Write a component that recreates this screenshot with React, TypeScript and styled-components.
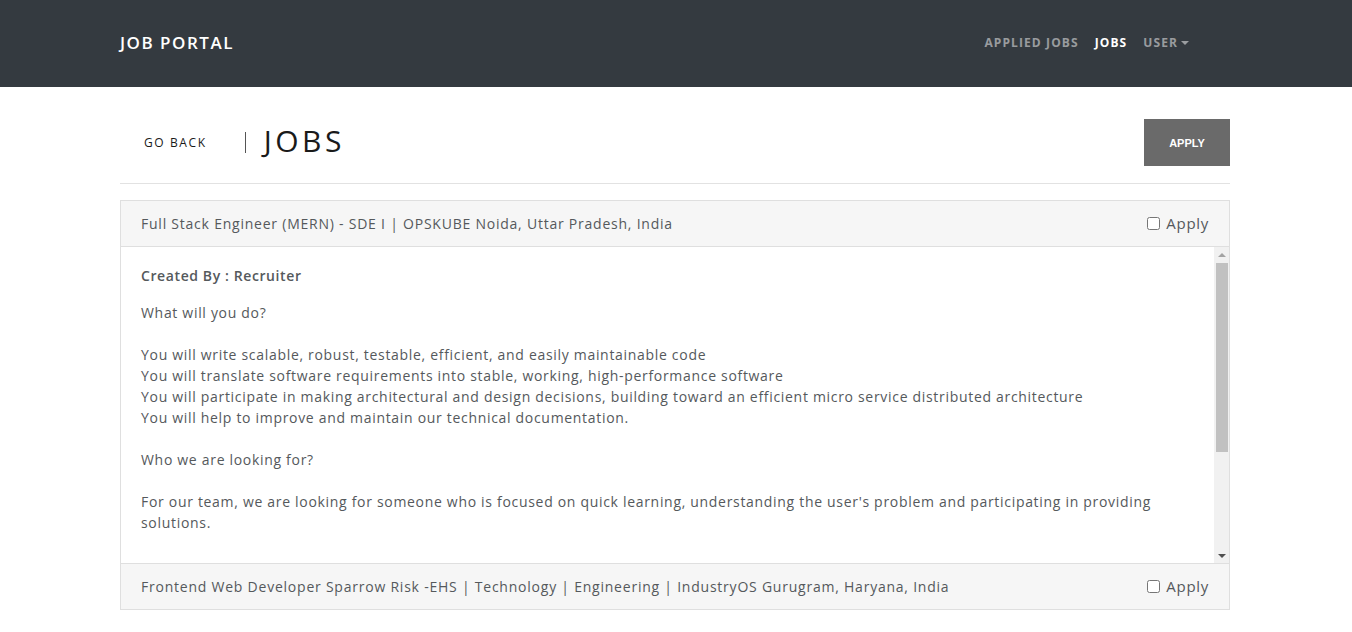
import React from 'react';
import styled, {createGlobalStyle} from 'styled-components';

const GlobalStyle = createGlobalStyle`
  body {
    margin: 0;
    background: #fff;
    font-family: "Open Sans", "Liberation Sans", sans-serif;
    color: #55595c;
  }
`;

const jobs = [
    {
        title: 'Full Stack Engineer (MERN) - SDE I | OPSKUBE Noida, Uttar Pradesh, India',
        open: true,
        createdBy: 'Recruiter',
        description: `What will you do?

You will write scalable, robust, testable, efficient, and easily maintainable code
You will translate software requirements into stable, working, high-performance software
You will participate in making architectural and design decisions, building toward an efficient micro service distributed architecture
You will help to improve and maintain our technical documentation.

Who we are looking for?

For our team, we are looking for someone who is focused on quick learning, understanding the user's problem and participating in providing solutions.


Requirements
Good knowledge of JavaScript, Node.js, React and MongoDB
Familiarity with REST APIs and version control
Strong problem solving skills`,
    },
    {
        title: 'Frontend Web Developer Sparrow Risk -EHS | Technology | Engineering | IndustryOS Gurugram, Haryana, India',
        open: false,
    },
];

const App = () => {
    return (
        <>
            <GlobalStyle/>
            <Navbar>
                <NavInner>
                    <Brand>Job Portal</Brand>
                    <NavLinks>
                        <NavLink>Applied Jobs</NavLink>
                        <NavLink active>Jobs</NavLink>
                        <NavLink>User<Caret/></NavLink>
                    </NavLinks>
                </NavInner>
            </Navbar>
            <Container>
                <TopRow>
                    <GoBack>Go Back</GoBack>
                    <Divider/>
                    <Title>Jobs</Title>
                    <ApplyButton disabled>Apply</ApplyButton>
                </TopRow>
                <Rule/>
                <Accordion>
                    {jobs.map((job) => (
                        <React.Fragment key={job.title}>
                            <CardHeader>
                                <span>{job.title}</span>
                                <CheckLabel>
                                    <input type="checkbox"/>
                                    Apply
                                </CheckLabel>
                            </CardHeader>
                            {job.open && (
                                <CardBody>
                                    <BodyContent>
                                        <CreatedBy>Created By : {job.createdBy}</CreatedBy>
                                        <Description>{job.description}</Description>
                                    </BodyContent>
                                    <ScrollTrack>
                                        <ScrollArrow up/>
                                        <ScrollThumb/>
                                        <ScrollArrow/>
                                    </ScrollTrack>
                                </CardBody>
                            )}
                        </React.Fragment>
                    ))}
                </Accordion>
            </Container>
        </>
    );
};

const Navbar = styled.nav`
  background: #343a40;
  height: 87px;
  display: flex;
  align-items: center;
`;

const NavInner = styled.div`
  width: 1110px;
  margin-left: calc(50% - 556px);
  display: flex;
  align-items: center;
  justify-content: space-between;
  padding-bottom: 2px;
`;

const Brand = styled.a`
  color: #fff;
  font-size: 17px;
  font-weight: 600;
  letter-spacing: 1.5px;
  text-transform: uppercase;
`;

const NavLinks = styled.div`
  display: flex;
  gap: 16px;
  margin-right: 41px;
`;

const NavLink = styled.a<{active?: boolean}>`
  display: flex;
  align-items: center;
  color: ${({active}) => active ? '#fff' : 'rgba(255, 255, 255, 0.5)'};
  font-size: 12px;
  font-weight: 700;
  letter-spacing: 1.1px;
  text-transform: uppercase;
`;

const Caret = styled.span`
  display: inline-block;
  margin-left: 3px;
  border-top: 4px solid currentColor;
  border-left: 4px solid transparent;
  border-right: 4px solid transparent;
`;

const Container = styled.main`
  width: 1110px;
  margin-left: calc(50% - 556px);
  padding-top: 32px;
`;

const TopRow = styled.div`
  display: flex;
  align-items: center;
  height: 47px;
`;

const GoBack = styled.button`
  background: none;
  border: 0;
  padding: 0 24px;
  font-family: inherit;
  font-size: 12px;
  font-weight: 400;
  letter-spacing: 1.6px;
  text-transform: uppercase;
  color: #1a1a1a;
`;

const Divider = styled.span`
  width: 1px;
  height: 21px;
  background: #555;
  margin: 0 18px 0 14px;
`;

const Title = styled.h1`
  margin: 0 0 4px;
  font-size: 30px;
  font-weight: 400;
  letter-spacing: 3.5px;
  color: #1a1a1a;
  text-transform: uppercase;
`;

const ApplyButton = styled.button`
  margin-left: auto;
  width: 86px;
  height: 47px;
  border: 0;
  background: #6a6a6a;
  color: #fff;
  font-family: "Liberation Sans", sans-serif;
  font-size: 11px;
  font-weight: 700;
  text-transform: uppercase;
`;

const Rule = styled.hr`
  border: 0;
  border-top: 1px solid #e2e2e2;
  margin: 17px 0 16px;
`;

const Accordion = styled.div`
  border: 1px solid #dfdfdf;
`;

const CardHeader = styled.div`
  display: flex;
  align-items: center;
  justify-content: space-between;
  height: 44px;
  padding: 0 20px 1px;
  background: #f6f6f6;
  font-size: 14px;
  letter-spacing: 0.77px;
`;

const CheckLabel = styled.label`
  display: flex;
  align-items: center;
  gap: 6px;
  font-size: 15px;
  letter-spacing: 0.7px;

  input {
    margin: 0;
    width: 13px;
    height: 13px;
  }
`;

const CardBody = styled.div`
  display: flex;
  height: 316px;
  border-top: 1px solid #dfdfdf;
  border-bottom: 1px solid #dfdfdf;
`;

const BodyContent = styled.div`
  flex: 1;
  overflow: hidden;
  padding: 18px 20px 0;
  font-size: 14px;
  letter-spacing: 0.69px;
  line-height: 21px;
`;

const CreatedBy = styled.div`
  font-weight: 600;
  letter-spacing: 0.6px;
  margin-bottom: 16px;
`;

const Description = styled.div`
  white-space: pre-wrap;
`;

const ScrollTrack = styled.div`
  width: 15px;
  flex: none;
  display: flex;
  flex-direction: column;
  background: #f1f1f1;
`;

const ScrollArrow = styled.div<{up?: boolean}>`
  height: 15px;
  display: flex;
  align-items: center;
  justify-content: center;
  margin-top: ${({up}) => up ? '0' : 'auto'};

  &::before {
    content: "";
    border-left: 4px solid transparent;
    border-right: 4px solid transparent;
    ${({up}) => up
        ? 'border-bottom: 4px solid #a3a3a3;'
        : 'border-top: 4px solid #505050;'}
  }
`;

const ScrollThumb = styled.div`
  height: 189px;
  margin: 1px 1px 0 2px;
  background: #c1c1c1;
`;

export default App;
